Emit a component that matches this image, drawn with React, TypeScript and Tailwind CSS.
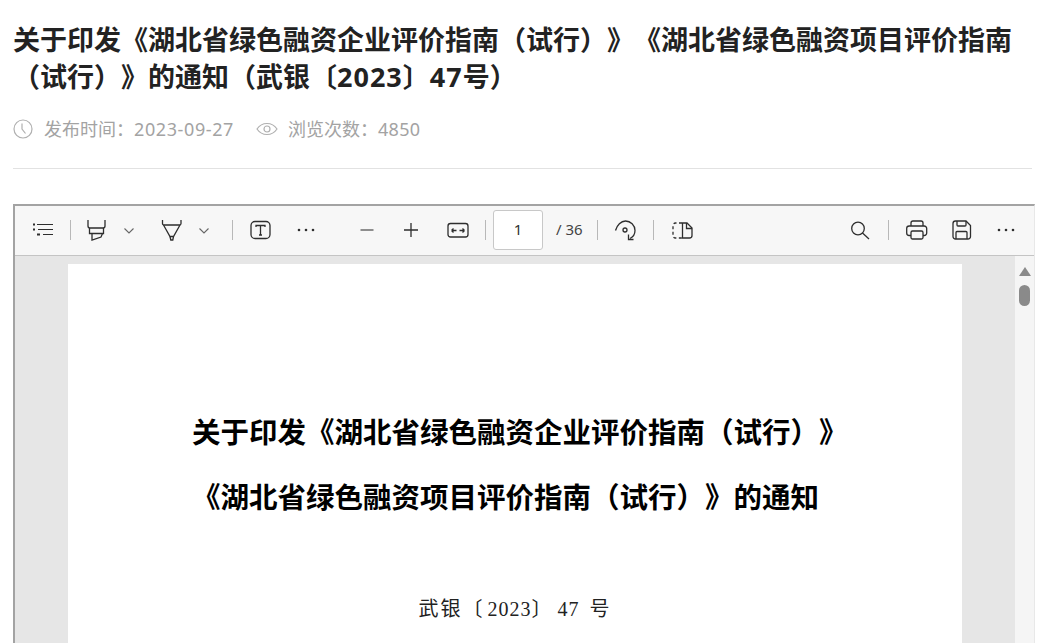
import React from 'react';

function Sep() {
  return <div className="w-px h-5 bg-[#b8b8b8] shrink-0" />;
}

function Ic({ children, className = '' }: { children: React.ReactNode; className?: string }) {
  return (
    <svg viewBox="0 0 24 24" fill="none" stroke="#2e2e2e" strokeWidth="1.3" className={`w-6 h-6 shrink-0 ${className}`}>
      {children}
    </svg>
  );
}

function Chevron({ className = '' }: { className?: string }) {
  return (
    <svg viewBox="0 0 16 16" fill="none" stroke="#666" strokeWidth="1.1" className={`w-4 h-4 shrink-0 ${className}`}>
      <path d="M3.500 6.500L8 11l4.500-4.500" />
    </svg>
  );
}

function Dots({ className = '' }: { className?: string }) {
  return (
    <Ic className={className}>
      <circle cx="5" cy="12" r="1.300" fill="#2e2e2e" stroke="none" />
      <circle cx="12" cy="12" r="1.300" fill="#2e2e2e" stroke="none" />
      <circle cx="19" cy="12" r="1.300" fill="#2e2e2e" stroke="none" />
    </Ic>
  );
}

function Toolbar() {
  return (
    <div className="h-[50px] bg-[#f7f7f7] border-b border-[#c4c4c4] flex items-center shrink-0 pb-[2px]">
      <Ic className="ml-[15px]">
        <path d="M7 6.500h16M8 11.500h15M13 16.500h10" strokeWidth="1.200" />
        <path d="M3 6.500h2M3 11.500h2M7 16.500h3" strokeWidth="2" />
      </Ic>
      <div className="ml-4"><Sep /></div>
      <Ic className="ml-[13px]">
        <path d="M4 2v6c0 1.200.8 2 2 2h13c1.200 0 2-.8 2-2V2" />
        <path d="M5.500 10v5.500h14V10" />
        <path d="M8 15.500V22l9-3 1.500-3.500" />
      </Ic>
      <Chevron className="ml-[13px]" />
      <Ic className="ml-[23px]">
        <path d="M2.500 2v3.500c0 1 .7 1.500 1.500 1.500h15.500c.8 0 1.500-.5 1.500-1.500V2" />
        <path d="M3.500 7l6.500 11.500h3.500L20 7" />
        <path d="M10 18.500l.8 3.500h2l.7-3.500" />
      </Ic>
      <Chevron className="ml-3" />
      <div className="ml-5"><Sep /></div>
      <Ic className="ml-[15px]">
        <rect x="3" y="3.500" width="19" height="17" rx="4" />
        <path d="M8 9V7.500h9V9M12.500 7.500V17M11 17h3" />
      </Ic>
      <Dots className="ml-[22px]" />
      <Ic className="ml-[37px]">
        <path d="M5.500 12h13" stroke="#555" />
      </Ic>
      <Ic className="ml-5">
        <path d="M12 5v14M5 12h14" />
      </Ic>
      <Ic className="ml-[23px]">
        <rect x="2" y="5.500" width="20" height="13.500" rx="2.500" />
        <path d="M5.500 12.500h5M5.500 12.500l2-2M5.500 12.500l2 2M13.500 12.500h5M18.500 12.500l-2-2M18.500 12.500l-2 2" />
      </Ic>
      <div className="ml-[15px]"><Sep /></div>
      <div className="ml-[7px] w-[50px] h-10 bg-white border border-[#c8c8c8] rounded-[3px] flex items-center justify-center text-[15px] text-[#333] shrink-0">1</div>
      <span className="ml-[13px] w-[26px] text-[15px] text-[#444] whitespace-nowrap shrink-0">/ 36</span>
      <div className="ml-[15px]"><Sep /></div>
      <Ic className="ml-4">
        <path d="M1.500 12.500C3 7 7 3 11.500 3c5 0 9.500 4 9.500 9.500 0 3.500-2 6.500-5 8" />
        <path d="M14.500 16.500v5h5" />
        <circle cx="11" cy="12" r="2" />
      </Ic>
      <div className="ml-[15px]"><Sep /></div>
      <Ic className="ml-4">
        <path d="M12.500 5H17l5 5v7.500a2.500 2.500 0 0 1-2.500 2.500h-7z" />
        <path d="M16.500 5v5.500H22" />
        <path d="M12 5H5.500A2.500 2.500 0 0 0 3 7.500v10A2.500 2.500 0 0 0 5.500 20H12" strokeDasharray="3 2.500" />
      </Ic>
      <Ic className="ml-[154px]">
        <circle cx="10" cy="10.500" r="6.300" />
        <path d="M14.500 15l6.500 6" />
      </Ic>
      <div className="ml-4"><Sep /></div>
      <Ic className="ml-[15px]">
        <path d="M7 8V5a2 2 0 0 1 2-2h8a2 2 0 0 1 2 2v3" />
        <path d="M7 17.500H5.200a2.500 2.500 0 0 1-2.500-2.500v-4.500A2.500 2.500 0 0 1 5.200 8h15a2.500 2.500 0 0 1 2.500 2.500V15a2.500 2.500 0 0 1-2.500 2.500H19" />
        <rect x="7" y="13" width="12" height="8" rx="1.500" />
      </Ic>
      <Ic className="ml-[21px]">
        <path d="M6.500 3h10.500l4.500 4.500v11a2.500 2.500 0 0 1-2.500 2.500H6.500A2.500 2.500 0 0 1 4 18.500v-13A2.500 2.500 0 0 1 6.500 3z" />
        <path d="M8 3v4a1 1 0 0 0 1 1h7a1 1 0 0 0 1-1V3" />
        <path d="M7 21v-6.500a1 1 0 0 1 1-1h9a1 1 0 0 1 1 1V21" />
      </Ic>
      <Dots className="ml-[21px]" />
    </div>
  );
}

export default function App() {
  return (
    <div className="h-[643px] w-[1040px] overflow-hidden bg-white pl-[13px] font-['Noto_Sans','Noto_Sans_CJK_SC',sans-serif] [text-spacing-trim:space-all]">
      <h1 className="w-[1010px] pt-[21px] text-[27px] leading-[37px] font-bold text-[#222] whitespace-nowrap">
        <span className="block">关于印发《湖北省绿色融资企业评价指南（试行）》《湖北省绿色融资项目评价指南</span>
        <span className="block">（试行）》的通知（武银〔<span className="tracking-[1px]">2023</span>〕<span className="tracking-[1px]">47</span>号）</span>
      </h1>
      <div className="mt-[21px] flex items-center text-[18px] leading-[26px] text-[#a3a3a3]">
        <svg viewBox="0 0 20 20" fill="none" stroke="#b0b0b0" strokeWidth="1.200" className="w-5 h-5 shrink-0">
          <circle cx="10" cy="10" r="9" />
          <path d="M9 4.500V10l3.500 4.500" />
        </svg>
        <span className="ml-[11px]">发布时间：<span className="tracking-[0.6px]">2023-09-27</span></span>
        <svg viewBox="0 0 22 14" fill="none" stroke="#b0b0b0" strokeWidth="1.200" className="ml-[22px] w-[22px] h-[14px] shrink-0">
          <path d="M1 7c2.500-3.700 6-5.500 10-5.500S18.500 3.300 21 7c-2.500 3.700-6 5.500-10 5.500S3.500 10.700 1 7z" />
          <circle cx="11" cy="7" r="3" />
        </svg>
        <span className="ml-[10px]">浏览次数：<span className="tracking-[0.3px]">4850</span></span>
      </div>
      <div className="mt-[26px] w-[1019px] border-t border-[#e2e2e2]" />
      <div className="mt-[35px] w-[1022px] h-[500px] border-t-2 border-l-2 border-r border-t-[#a3a3a3] border-l-[#a3a3a3] border-r-[#e8e8e8] flex flex-col">
        <Toolbar />
        <div className="flex-1 bg-[#e6e6e6] flex min-h-0">
          <div className="ml-[53px] mt-2 w-[894px] bg-white flex flex-col">
            <div className="pt-[136px] pl-[124px] text-[28.5px] leading-[65px] font-bold text-black whitespace-nowrap">
              <p>关于印发《湖北省绿色融资企业评价指南（试行）》</p>
              <p>《湖北省绿色融资项目评价指南（试行）》的通知</p>
            </div>
            <p className="mt-[64px] text-center text-[20px] leading-[30px] tracking-[2px] text-[#222] whitespace-nowrap font-['Liberation_Serif','Noto_Sans_CJK_SC',serif]">
              武银〔<span className="ml-[3px] tracking-[1px]">2023</span>〕<span className="ml-[4px] tracking-[1px]">47</span><span className="ml-[10px]">号</span>
            </p>
          </div>
          <div className="ml-[53px] w-[19px] flex flex-col items-center pt-[11px] bg-[#f5f5f5]">
            <div className="w-0 h-0 border-x-[6.5px] border-x-transparent border-b-[9px] border-b-[#8a8a8a]" />
            <div className="mt-[9px] w-[11px] h-[21px] rounded-full bg-[#8a8a8a]" />
          </div>
        </div>
      </div>
    </div>
  );
}
